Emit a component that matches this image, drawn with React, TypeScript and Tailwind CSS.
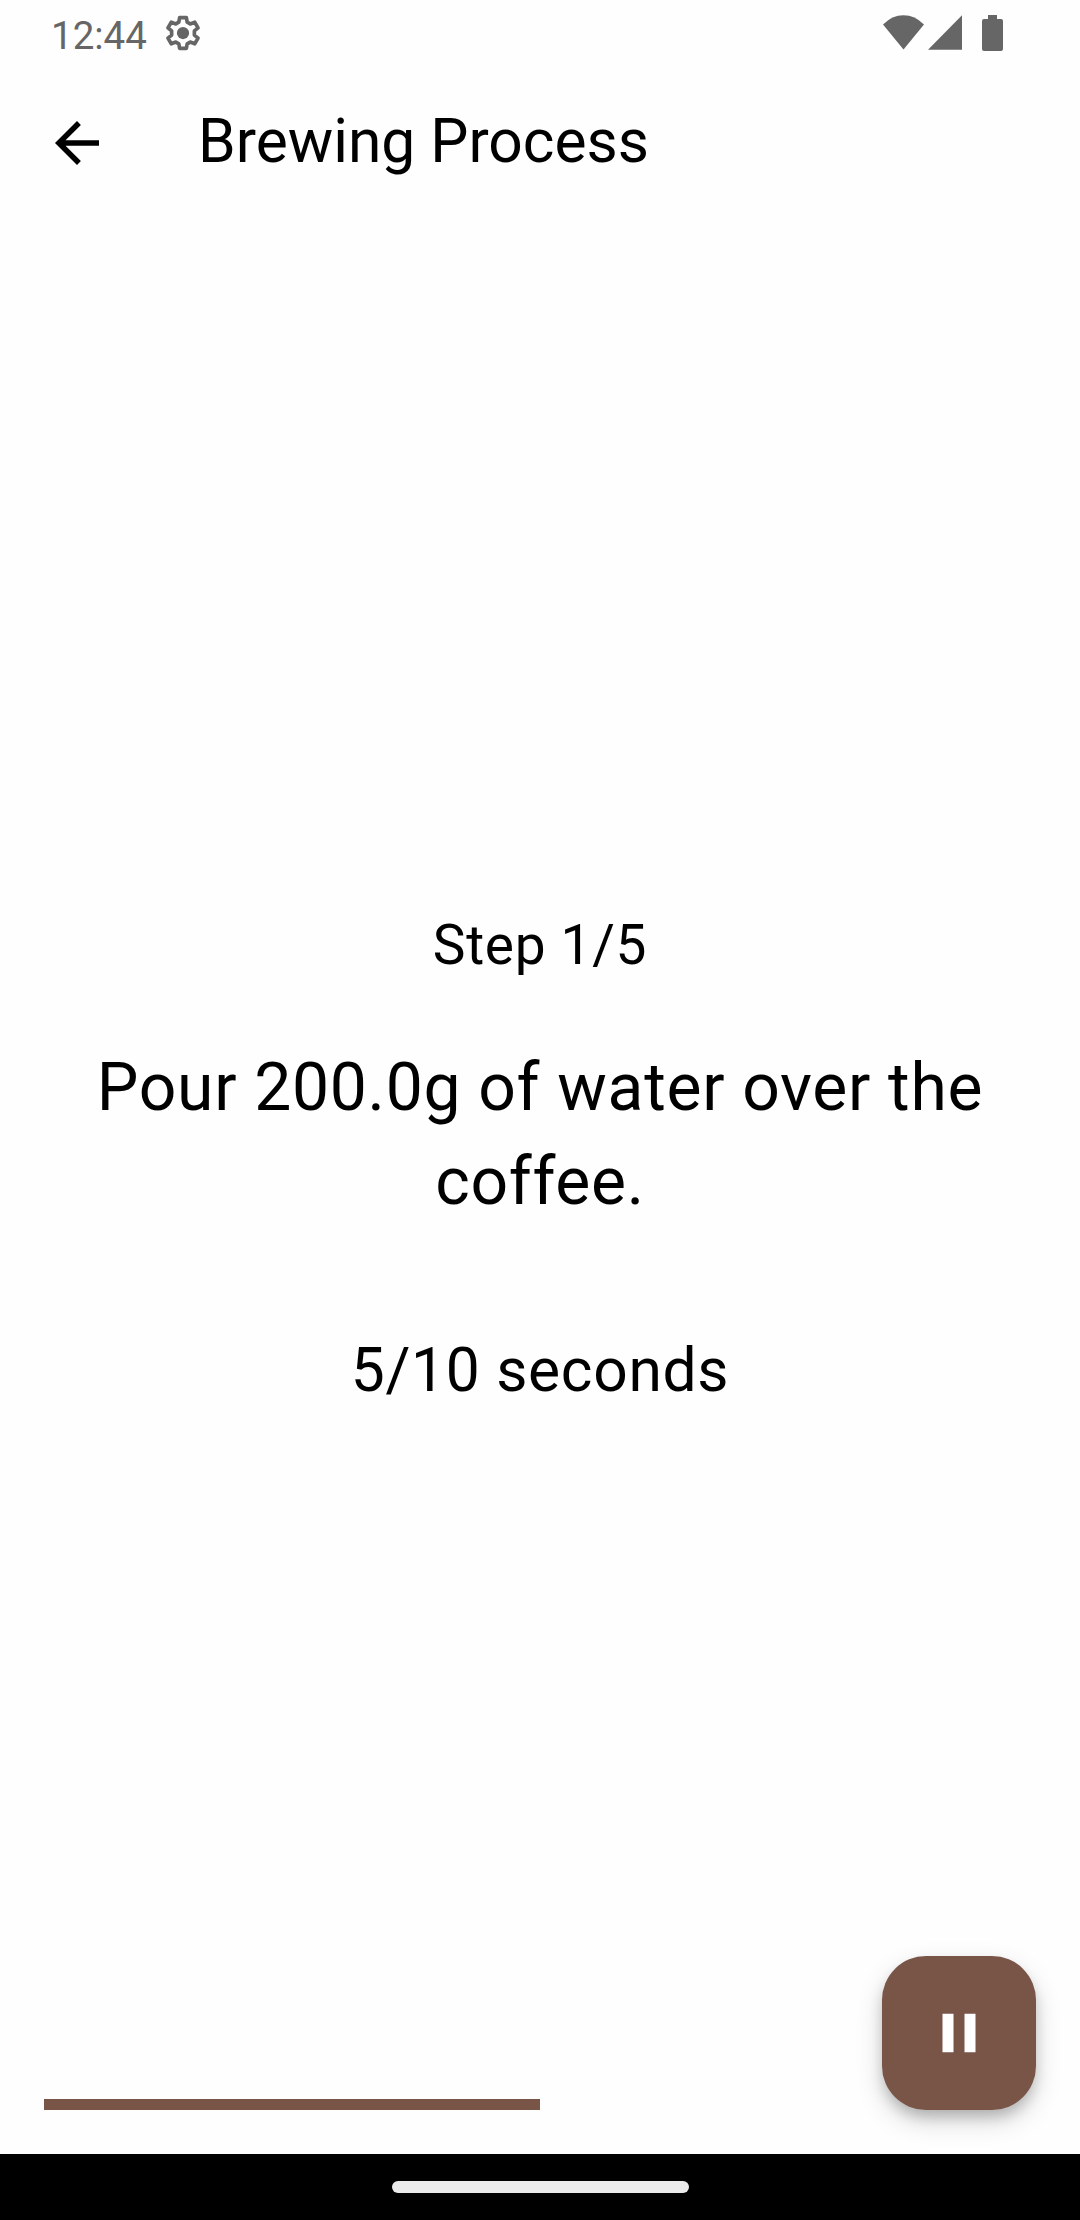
export default function App() {
  return (
    <div className="relative flex h-[2220px] w-[1080px] flex-col overflow-hidden bg-[#fefefe] font-[Roboto,sans-serif] text-black">
      <div className="flex h-[66px] shrink-0 items-center justify-between pl-[51px] pr-[77px] text-[#666]">
        <div className="flex items-center">
          <span className="pt-[5px] text-[38.5px] leading-[61px]">12:44</span>
          <svg className="ml-[15.5px] size-[42px]" viewBox="0 0 24 24" fill="none" stroke="currentColor" strokeWidth="2.1" strokeLinejoin="round">
            <path d="M10.100 3.200h3.800l.5 2.600 1.700 1 2.600-.95 1.900 3.200-2.100 1.750v2.400l2.100 1.750-1.900 3.200-2.600-.95-1.700 1-.5 2.600h-3.800l-.5-2.600-1.700-1-2.600.95-1.900-3.200 2.100-1.750v-2.400L3.400 9.050l1.900-3.200 2.600.95 1.700-1z" />
            <circle cx="12" cy="12" r="3.500" fill="currentColor" stroke="none" />
          </svg>
        </div>
        <div className="flex items-center">
          <svg className="h-[36px] w-[41px]" viewBox="0 0 41 36" fill="currentColor"><path d="M0 9.500Q9 .200 20.500.200T41 9.500L20.500 34.500z" /></svg>
          <svg className="ml-[4px] h-[36px] w-[34px]" viewBox="0 0 34 36" fill="currentColor"><path d="M34 .200v34.500H0z" /></svg>
          <svg className="ml-[20px] h-[36px] w-[21px]" viewBox="0 0 21 36" fill="currentColor"><path d="M6 0h9v4h4a2 2 0 0 1 2 2v28a2 2 0 0 1-2 2H2a2 2 0 0 1-2-2V6a2 2 0 0 1 2-2h4z" /></svg>
        </div>
      </div>
      <header className="flex h-[154px] shrink-0 items-center pl-[44px]">
        <svg className="size-[66px]" viewBox="0 0 24 24" fill="currentColor"><path d="M20 11H7.830l5.590-5.590L12 4l-8 8 8 8 1.410-1.410L7.830 13H20z" /></svg>
        <h1 className="ml-[88px] pb-[4px] text-[60.5px] leading-[77px]">Brewing Process</h1>
      </header>
      <main className="flex flex-1 flex-col items-center justify-center px-[44px] pt-[2px] text-center tracking-[0.6875px]">
        <p className="text-[55px] leading-[78.65px]">Step 1/5</p>
        <p className="mt-[55.5px] text-[66px] leading-[94.3px]">Pour 200.0g of water over the coffee.</p>
        <p className="mt-[99px] text-[60.5px] leading-[86.5px]">5/10 seconds</p>
      </main>
      <div className="flex h-[55px] shrink-0 items-start px-[44px]">
        <div className="h-[11px] w-[496px] bg-[#795548]" />
      </div>
      <button aria-label="Pause" className="absolute left-[882px] top-[1956px] flex size-[154px] items-center justify-center rounded-[44px] bg-[#795548] text-white shadow-[0_8px_14px_-2px_rgba(0,0,0,0.2),0_11px_26px_rgba(0,0,0,0.17)]">
        <svg className="size-[66px]" viewBox="0 0 24 24" fill="currentColor"><path d="M6 5h4v14H6zM14 5h4v14h-4z" /></svg>
      </button>
      <div className="flex h-[66px] shrink-0 items-center justify-center bg-black">
        <div className="h-[12px] w-[297px] rounded-full bg-[#ebebeb]" />
      </div>
    </div>
  );
}
